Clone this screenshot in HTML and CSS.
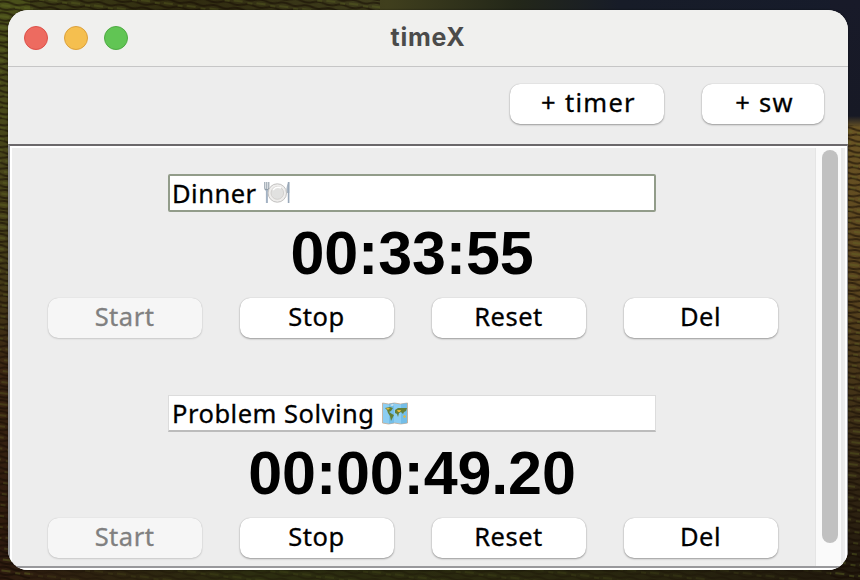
FILE: index.html
```html
<!DOCTYPE html>
<html lang="en">
<head>
<meta charset="utf-8">
<title>timeX</title>
<link rel="stylesheet" href="styles.css">
</head>
<body>
<svg class="wallpaper" width="860" height="580" aria-hidden="true">
  <defs>
    <linearGradient id="top"><stop offset="0" stop-color="#3f4118"/><stop offset=".22" stop-color="#302b10"/><stop offset=".45" stop-color="#403f1d"/><stop offset=".6" stop-color="#232719"/><stop offset=".72" stop-color="#171c28"/><stop offset="1" stop-color="#161b2b"/></linearGradient>
    <linearGradient id="left" x2="0" y2="1"><stop offset="0" stop-color="#4a501a"/><stop offset=".45" stop-color="#453d18"/><stop offset=".65" stop-color="#3a2512"/><stop offset="1" stop-color="#2b170d"/></linearGradient>
    <linearGradient id="right" x2="0" y2="1"><stop offset="0" stop-color="#181a29"/><stop offset=".2" stop-color="#171925"/><stop offset=".22" stop-color="#6a5424"/><stop offset=".5" stop-color="#59441e"/><stop offset=".75" stop-color="#3a2c15"/><stop offset="1" stop-color="#20180d"/></linearGradient>
    <linearGradient id="bottom"><stop offset="0" stop-color="#2e1b0f"/><stop offset=".3" stop-color="#2c2e10"/><stop offset=".7" stop-color="#29270f"/><stop offset="1" stop-color="#21190d"/></linearGradient>
    <pattern id="rows" width="23" height="11" patternUnits="userSpaceOnUse" patternTransform="rotate(7)"><path d="M0 2q6-2 12 0t11 0M0 8q6 2 12 0t11 0" fill="none" stroke="#160c04" stroke-width="2"/><path d="M2 5h9m5 1h5" stroke="#657126" stroke-width="1"/></pattern>
  </defs>
  <rect width="860" height="30" fill="url(#top)"/>
  <rect width="30" height="580" fill="url(#left)"/>
  <rect x="830" width="30" height="580" fill="url(#right)"/>
  <rect y="550" width="860" height="30" fill="url(#bottom)"/>
  <path d="M0 0h380v30H30v550H0zM830 125h30v455h-30z" fill="url(#rows)" opacity=".6"/>
  <path d="M0 550h860v30H0z" fill="url(#rows)" opacity=".3"/>
</svg>
<main class="window">
  <header class="titlebar">
    <div class="lights"><i class="close"></i><i class="minimize"></i><i class="expand"></i></div>
    <h1>timeX</h1>
  </header>
  <div class="toolbar">
    <button class="add-timer">+ timer</button>
    <button class="add-sw">+ sw</button>
  </div>
  <section class="scroller">
    <div class="list">
      <article class="item">
        <div class="field focused"><span class="dinner">Dinner</span>
          <svg class="plate" width="28" height="26" viewBox="0 0 28 26"><path d="M1.8 2v6q0 2 2 2M5.8 2v6q0 2-2 2M3.8 2v8" fill="none" stroke="#8e9ba6" stroke-width="1.1"/><path d="M3.9 10v13" stroke="#a3b2c3" stroke-width="2"/><path d="M26.3 2q-3 1-3 11h3z" fill="#adb8c3"/><path d="M25.6 2v21" stroke="#98a7b8" stroke-width="1.6"/><circle cx="14.3" cy="13" r="9.2" fill="#efeeed" stroke="#c2c1c0"/><circle cx="14.3" cy="13" r="6.3" fill="#e1e1e0" stroke="#cfcdcb" stroke-width=".9"/><path d="M10 10q3-4 8-2" fill="none" stroke="#fff" stroke-width="1.4"/></svg>
        </div>
        <div class="time">00:33:55</div>
        <div class="actions"><button disabled>Start</button><button>Stop</button><button>Reset</button><button>Del</button></div>
      </article>
      <article class="item">
        <div class="field"><span class="problem">Problem Solving</span>
          <svg class="map" width="26" height="23" viewBox="0 0 26 23"><path d="M.5 1l6 1 6-1 6 1 7-1v20l-7 1-6-1-6 1-6-1z" fill="#8bcdf2" stroke="#c2a890" stroke-width=".8"/><path d="M7 2l5-1v20l-5 1zM19 2l6-1v20l-6 1z" fill="#69b5e2" opacity=".65"/><path d="M3 6l5-1 3 1-2 3-2 1 3 2 2 1-2 4-1 2-1-5-2-3-1-3zM13 8l3-2 5 0 4 0-1 3-2 1-1 2-2-2-2 1-1 4-1-3-2-1z" fill="#647f35"/><path d="M15 8h4l-1 2-2 0zM21 14l2-1 1 2-2 1zM4 6l4 0-2 2z" fill="#e0b83c"/><path d="M8 3l3-1 1 1-2 1z" fill="#d9e4e9"/></svg>
        </div>
        <div class="time">00:00:49.20</div>
        <div class="actions"><button disabled>Start</button><button>Stop</button><button>Reset</button><button>Del</button></div>
      </article>
    </div>
    <div class="track"><div class="thumb"></div></div>
  </section>
</main>
</body>
</html>
```

FILE: styles.css
```css
* { box-sizing: border-box; }
body { margin: 0; width: 860px; height: 580px; padding: 10px 12px 10px 8px; overflow: hidden; background: #29220f; font-family: "Noto Sans", "Open Sans", sans-serif; }
.wallpaper { position: absolute; inset: 0; z-index: -1; }
.window { width: 840px; height: 560px; border-radius: 20px; overflow: hidden; background: #ededed; box-shadow: 0 0 2px #0008; }
.titlebar { height: 57px; background: #f0f0ee; border-bottom: 1px solid #c6c6c6; display: grid; grid-template-columns: 1fr auto 1fr; align-items: center; }
.lights { display: flex; gap: 16px; padding-left: 16px; }
.lights i { width: 24px; height: 24px; border-radius: 50%; border: 1px solid; }
.lights .close { background: #ed6b60; border-color: #dc5149; }
.lights .minimize { background: #f5bf4f; border-color: #dba03c; }
.lights .expand { background: #61c554; border-color: #4eaa43; }
h1 { margin: 0; padding-bottom: 3px; font: 700 25px/32px Inter, sans-serif; color: #4b4b4a; letter-spacing: .7px; }
.toolbar { height: 77px; padding: 17px 24px 0 0; display: flex; justify-content: flex-end; gap: 38px; }
button { border: 0; border-radius: 10px; background: #fff; box-shadow: 0 0 1px 0 #0004, 0 1px 2px #0005; height: 40px; width: 154px; padding: 0 1px 3px 0; color: #000; font: 400 25.5px/35px "Noto Sans", sans-serif; letter-spacing: .5px; -webkit-text-stroke: .3px; }
.toolbar button { letter-spacing: 1.3px; padding-left: 4px; }
.toolbar .add-sw { width: 122px; }
button:disabled { background: #f6f6f6; color: #808080; box-shadow: 0 0 1px #0003, 0 1px 2px #0002; }
.scroller { height: 424px; border: 2px solid #98989b; border-top-color: #6b686b; border-right-width: 1px; display: flex; box-shadow: inset 2px 2px #fff, inset -2px 0 #fff, 0 2px #fff; }
.list { width: 805px; padding: 28px 0 0 38px; }
.item { width: 730px; height: 220px; display: grid; grid-template-rows: 38px 86px 40px; }
.field { width: 488px; height: 37px; margin: 1px 0 0 120px; border: 1px solid #dcdcdc; border-bottom: 2px solid #bcbcbc; background: #fff; display: flex; align-items: center; padding-left: 3px; font-size: 25.5px; line-height: 34px; white-space: nowrap; letter-spacing: .5px; -webkit-text-stroke: .3px; }
.focused { height: 38px; margin-top: 0; border: 2px solid #929c8a; border-radius: 2px; padding-left: 2px; }
.dinner { width: 91px; }
.problem { width: 210px; }
.plate, .map { flex: none; }
.time { margin-left: -2px; font: 700 61px/76px "Liberation Sans", sans-serif; text-align: center; padding-top: 3px; letter-spacing: -.15px; }
.actions { display: flex; gap: 38px; }
.track { width: 28px; margin-top: 2px; padding: 2px 0 0 6px; background: #fafafa; border-left: 1px solid #e5e5e5; border-right: 2px solid #e9e9e9; }
.thumb { width: 16px; height: 393px; border-radius: 8px; background: #c1c1c1; }
```
